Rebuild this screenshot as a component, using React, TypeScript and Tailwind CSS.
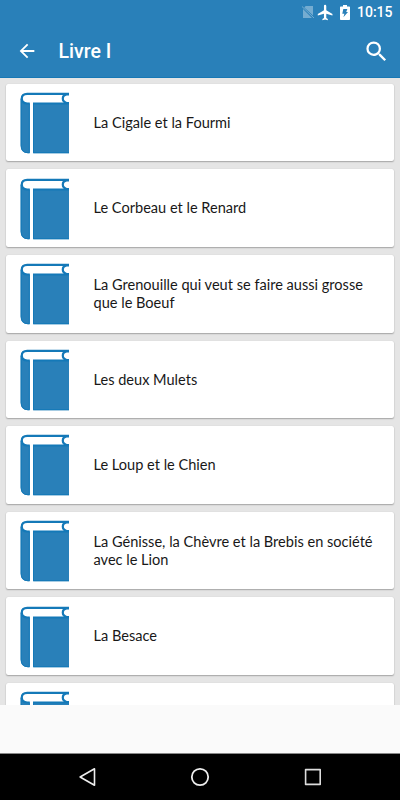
import React from "react";

const fables = [
  "La Cigale et la Fourmi",
  "Le Corbeau et le Renard",
  "La Grenouille qui veut se faire aussi grosse que le Boeuf",
  "Les deux Mulets",
  "Le Loup et le Chien",
  "La Génisse, la Chèvre et la Brebis en société avec le Lion",
  "La Besace",
  "",
];

function Book() {
  return (
    <svg className="mt-px ml-[14px] h-[62px] w-[49px] shrink-0" viewBox="0 0 49 62">
      <path d="M.6 6.5V53.5Q.6 61.2 8 61.2H9.8V11H7Q2 10.5 .6 6.5Z" fill="#2980b9" />
      <path d="M13 11H49V61.2H13Z" fill="#2980b9" />
      <path d="M9.3 11V60.7H8Q1.2 60.7 1.2 53.5V6.5M49 60.7H13.5V11" fill="none" stroke="#1479b8" />
      <path d="M49 1.8H7.2C3.4 1.8 1.8 3.7 1.8 6.6S3.4 11.5 7.2 11.5H49Z" fill="#fff" />
      <path d="M49 1.8H7.2C3.4 1.8 1.8 3.7 1.8 6.6S3.4 11.5 7.2 11.5H9.8M13 11.5H49" fill="none" stroke="#1479b8" strokeWidth="2.2" />
      <path d="M49 2.4H46.6Q42.8 3.2 42.8 6.6T46.6 11H49" fill="none" stroke="#1479b8" strokeWidth="2.2" />
    </svg>
  );
}

function Card({ title }: { title: string }) {
  return (
    <li className="flex h-[77.6px] shrink-0 items-center rounded-[2px] bg-white shadow-[0_1px_1.5px_rgba(0,0,0,0.28),0_0_1px_rgba(0,0,0,0.15)]">
      <Book />
      <span className="ml-[24.5px] w-[288px] text-[14.57px] leading-[17.5px] text-[#181818]">{title}</span>
    </li>
  );
}

export default function App() {
  return (
    <div className="flex h-[800px] w-[400px] flex-col overflow-hidden bg-[#fafafa] font-['Lato',sans-serif]">
      <header className="h-[78px] shrink-0 border-b border-[#1778b5] bg-[#2980b9] font-['Roboto',sans-serif] text-white">
        <div className="flex h-6 items-center justify-end pr-[7.5px]">
          <svg className="h-[14px] w-[14px] opacity-35" viewBox="0 0 14 14">
            <path d="M4.7 1H12V10.6L3.3 2.4ZM2 4L11 13H2Z" fill="#fff" />
            <path d="M1 1.5L13 13" stroke="#fff" />
          </svg>
          <svg className="ml-[2px] h-[17px] w-[17px]" viewBox="1 1 22 22">
            <path d="M21 16v-2l-8-5V3.5a1.5 1.5 0 0 0-3 0V9l-8 5v2l8-2.5V19l-2 1.5V22l3.5-1 3.5 1v-1.5L13 19v-5.5z" fill="#fff" />
          </svg>
          <svg className="ml-[6px] h-[15px] w-[10px]" viewBox="0 0 10 15">
            <path d="M3 0H7V1.5H9.2Q10 1.5 10 2.3V14.2Q10 15 9.2 15H.8Q0 15 0 14.2V2.3Q0 1.5 .8 1.5H3Z" fill="#fff" />
            <path d="M3.3 4H7.4L6.2 7H8L3.4 12.3L4.4 8.7H2.3Z" fill="#2980b9" />
          </svg>
          <span className="ml-[6.5px] text-[14px] leading-6 font-medium">10:15</span>
        </div>
        <div className="flex h-[54px] items-center">
          <svg className="ml-[16px] h-[22px] w-[22px]" viewBox="0 0 24 24">
            <path d="M20 11H7.83l5.59-5.59L12 4l-8 8 8 8 1.41-1.41L7.83 13H20z" fill="#fff" />
          </svg>
          <h1 className="ml-[20.5px] pt-[2px] text-[19.5px] leading-6 font-medium">Livre I</h1>
          <svg className="mr-[10px] ml-auto h-[27px] w-[27px]" viewBox="0 0 24 24">
            <path d="M15.5 14h-.79l-.28-.27A6.47 6.47 0 0 0 16 9.5 6.5 6.5 0 1 0 9.5 16c1.61 0 3.09-.59 4.23-1.57l.27.28v.79l5 4.99L20.49 19zm-6 0a4.5 4.5 0 1 1 0-9 4.5 4.5 0 0 1 0 9z" fill="#fff" />
          </svg>
        </div>
      </header>
      <ul className="flex h-[627px] shrink-0 flex-col gap-[8px] overflow-hidden bg-[#e5e5e5] px-[6px] pt-[5.8px]">
        {fables.map((title, i) => (
          <Card key={i} title={title} />
        ))}
      </ul>
      <nav className="mt-auto flex h-[47px] shrink-0 items-center justify-center gap-[94px] border-t border-[#888] bg-black">
        <svg className="h-[20px] w-[18px]" viewBox="0 0 18 20" fill="none" stroke="#eee" strokeWidth="1.6" strokeLinejoin="round">
          <path d="M16.5 1.8V18.2L2.1 10Z" />
        </svg>
        <svg className="h-[20px] w-[20px]" viewBox="0 0 20 20" fill="none" stroke="#eee" strokeWidth="1.8">
          <circle cx="10" cy="10" r="8.2" />
        </svg>
        <svg className="h-[18px] w-[18px]" viewBox="0 0 18 18" fill="none" stroke="#ddd" strokeWidth="1.6" strokeLinejoin="round">
          <path d="M1.6 1.6H16.2V16.4H1.6Z" />
        </svg>
      </nav>
    </div>
  );
}
